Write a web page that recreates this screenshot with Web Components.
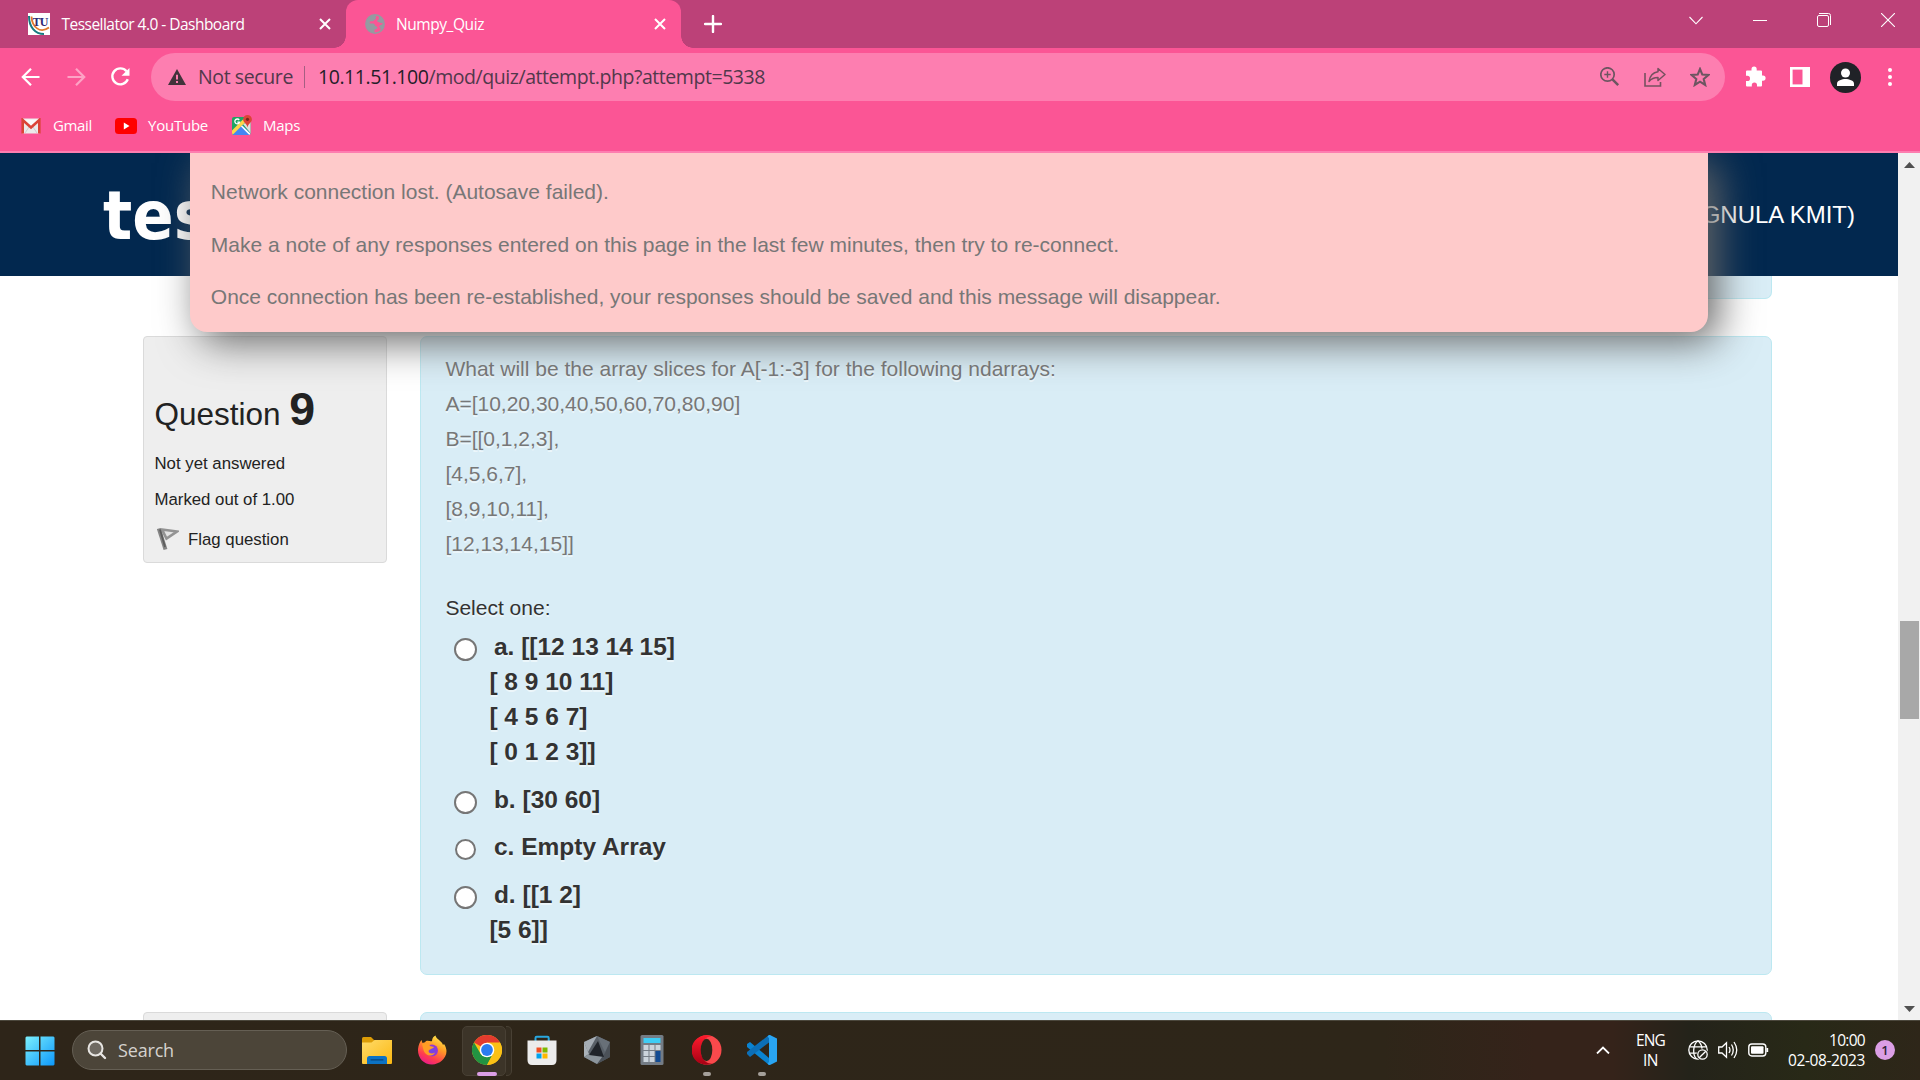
<!DOCTYPE html>
<html lang="en">
<head>
<meta charset="utf-8">
<title>Numpy_Quiz</title>
<style>
html,body{margin:0;height:100%;overflow:hidden}
body{font-family:"Liberation Sans",Arial,sans-serif;background:#fff}
</style>
</head>
<body>
<desktop-screen></desktop-screen>
<script>
const ICONS = {
  tu: [22,22,`<rect width="22" height="22" fill="#fff"/><path d="M1 3C1 14 7 21 16 21" fill="none" stroke="#177a80" stroke-width="2"/><path d="M3.500 3.500C4 14 12 21 21 14.500" fill="none" stroke="#e07a2b" stroke-width="1.800"/><text x="4.500" y="13" font-family="Liberation Serif" font-weight="bold" font-size="12" textLength="16" fill="#2d2a74">TU</text>`],
  globe: [20,20,`<circle cx="10" cy="10" r="9.200" fill="none" stroke="#949ba1" stroke-width="1.400"/><path d="M1 10C1 5 5 1 10 1L12 1.500C10.500 2.500 10.300 4.200 11.500 5 9 5 9.500 7.500 6.500 7.300 4.500 7.200 4 9 5.500 9.500H8C10 9.500 9.500 12 11.500 12.500 13.500 13 12 15.500 9.500 15.500V19C5 19 1 14.500 1 10zM13.500 1.800C17 3.500 19 6.500 19 10 19 13 17.500 15.500 15.500 17 16 14 15 13.500 14 12.500 15 11 17 11 18 9.500L14.500 8.500C13 8 11.500 7.500 12.500 6 14 5.500 14.500 4 13.500 1.800z" fill="#949ba1"/>`],
  x: [12,12,`<path d="M1 1L11 11M11 1L1 11" stroke="#fff" stroke-width="2"/>`],
  plus: [18,18,`<path d="M9 1V17M1 9H17" stroke="#fff" stroke-width="2.400" stroke-linecap="round"/>`],
  chev: [16,10,`<path d="M1.500 1L8 7.800 14.500 1" stroke="#fff" fill="none" stroke-width="1.100"/>`],
  min: [14,14,`<path d="M0 7.500H14" stroke="#fff"/>`],
  restore: [14,14,`<rect x=".5" y="2.500" width="11" height="11" rx="1.500" fill="none" stroke="#fff"/><path d="M2 .5H11.500Q13.500 .5 13.500 2.500V12" fill="none" stroke="#fff"/>`],
  close: [14,14,`<path d="M0 0L14 14M14 0L0 14" stroke="#fff" stroke-width="1.100"/>`],
  back: [20,20,`<path d="M18.500 10H2M10 1.800L1.800 10 10 18.200" stroke="#fff" fill="none" stroke-width="2.200"/>`],
  fwd: [20,20,`<path d="M1.500 10H18M10 1.800L18.200 10 10 18.200" stroke="#fda3c5" fill="none" stroke-width="2.200"/>`],
  reload: [20,20,`<path d="M16.500 4.200A8 8 0 1 0 17.800 12.300" stroke="#fff" fill="none" stroke-width="2.400"/><path d="M19.500 1V8.800H11.500z" fill="#fff"/>`],
  warn: [18,16,`<path d="M9 0L18 16H0z" fill="#42333b"/><path d="M9 5.700V10.500M9 12V14" stroke="#fd7eb0" stroke-width="2"/>`],
  zoomin: [20,20,`<circle cx="7.500" cy="7.500" r="6.700" fill="none" stroke="#6d5561" stroke-width="1.700"/><path d="M12.200 12.200L18.200 18.200" stroke="#6d5561" stroke-width="2.500"/><path d="M7.500 4.300V10.700M4.300 7.500H10.700" stroke="#6d5561" stroke-width="1.400"/>`],
  share: [22,20,`<path d="M1 6V19H16.500V15" fill="none" stroke="#75515f" stroke-width="1.600"/><path d="M14 1.500L21 7.500 14 13.500V10.500C9.500 10.500 7 12 5 14.500 5.800 9.500 8.500 5.500 14 4.800z" fill="none" stroke="#75515f" stroke-width="1.500" stroke-linejoin="round"/>`],
  star: [20,20,`<path d="M10 2L12.300 7.600 18.300 8 13.700 12 15.200 18 10 14.700 4.800 18 6.300 12 1.700 8 7.700 7.600z" fill="none" stroke="#6d5561" stroke-width="2.100"/>`],
  puzzle: [21,21,`<path d="M2 4.500H6.500V3.200a2.600 2.600 0 0 1 5.200 0V4.500H16Q17 4.500 17 5.500V9.500H18a2.600 2.600 0 0 1 0 5.200H17V19.500Q17 20.500 16 20.500H12V19a2.400 2.400 0 0 0-5.200 0V20.500H2Q1 20.500 1 19.500V15H2.400a2.400 2.400 0 0 0 0-5.200H1V5.500Q1 4.500 2 4.500z" fill="#fff"/>`],
  panel: [20,20,`<rect x="1.300" y="1.300" width="17.400" height="17.400" fill="none" stroke="#fff" stroke-width="2.600"/><rect x="12.500" y="1" width="7" height="18" fill="#fff"/>`],
  avatar: [31,31,`<circle cx="15.500" cy="15.500" r="15.500" fill="#202227"/><circle cx="15.500" cy="11" r="4.500" fill="#fff"/><path d="M7 24V21.500C7 18.500 12 17 15.500 17S24 18.500 24 21.500V24z" fill="#fff"/>`],
  dots: [4,18,`<circle cx="2" cy="2" r="2" fill="#fff"/><circle cx="2" cy="9" r="2" fill="#fff"/><circle cx="2" cy="16" r="2" fill="#fff"/>`],
  gmail: [20,16,`<rect x="1" y=".5" width="18" height="15" rx="1.500" fill="#eceaea"/><path d="M1 1.500H19L10 10z" fill="#f9f9f9"/><path d="M4 15L8 9M16 15L12 9" stroke="#d0cccc"/><path d="M1.700 15.500V2L10 9.500 18.300 2V15.500" fill="none" stroke="#db4437" stroke-width="2.600"/>`],
  youtube: [22,16,`<rect width="22" height="16" rx="3.500" fill="#f00"/><path d="M8.800 4.500L14.500 8 8.800 11.500z" fill="#fff"/>`],
  maps: [20,20,`<clipPath id="m"><rect y="2" width="18.500" height="18" rx="2"/></clipPath><g clip-path="url(#m)"><rect width="20" height="20" fill="#1fa463"/><path d="M0 20L10 10 20 20z" fill="#4486f4"/><path d="M11 9L20 20V5z" fill="#dfdfdf"/><path d="M-1 19L14 4" stroke="#ffd54b" stroke-width="3.500"/><path d="M9.500 11L19 20.500" stroke="#fff" stroke-width="1.600"/></g><path d="M7.200 5A2.400 2.400 0 1 0 7.500 7.200H5.300" fill="none" stroke="#fff" stroke-width="1.300"/><path d="M15.500 0a4.400 4.400 0 0 1 4.400 4.400C19.900 7.500 16 8.500 15.500 12.500 15 8.500 11.100 7.500 11.100 4.400A4.400 4.400 0 0 1 15.500 0z" fill="#db4437"/><circle cx="15.500" cy="4.300" r="1.600" fill="#7b231e"/>`],
  flag: [22,24,`<path d="M1.800 1.500L8.500 22.500" stroke="#858585" stroke-width="4"/><path d="M5 2.500L20 4.500 9.500 11.500z" fill="#e4e4e4" stroke="#939393" stroke-width="2.600"/><path d="M3 2.500L8 20" stroke="#5d5d5d" stroke-width="1.800"/>`],
  win: [30,30,`<defs><linearGradient id="w" x1="0" y1="0" x2="30" y2="30" gradientUnits="userSpaceOnUse"><stop offset="0" stop-color="#7df1fd"/><stop offset="1" stop-color="#0b96fb"/></linearGradient></defs><path d="M1.500 .5H14V14H.5V1.500zM15.500 .5H28.500L29.500 1.500V14H15.500zM.5 15.500H14V29.500H1.500L.5 28.500zM15.500 15.500H29.500V28.500L28.500 29.500H15.500z" fill="url(#w)"/>`],
  mag: [20,20,`<circle cx="8.500" cy="8.500" r="7" fill="#6f6a62" stroke="#e8e6e3" stroke-width="2"/><path d="M13.500 13.500L18 18" stroke="#e8e6e3" stroke-width="2.400" stroke-linecap="round"/>`],
  folder: [30,27,`<defs><linearGradient id="f" x1="0" y1="0" x2="1" y2="1"><stop offset="0" stop-color="#ffdb69"/><stop offset="1" stop-color="#fbb812"/></linearGradient></defs><path d="M0 1.500Q0 0 1.500 0H9L12.500 3.500V8H0z" fill="#dc9c06"/><path d="M0 5.500H9.500L12.500 3H30V26Q30 27 29 27H1Q0 27 0 26z" fill="url(#f)"/><path d="M5 27V21.500Q5 19 7.500 19H22.500Q25 19 25 21.500V27z" fill="#0c72c4"/><path d="M9 22.800H21" stroke="#07447c" stroke-width="1.200" stroke-linecap="round"/>`],
  firefox: [30,30,`<defs><linearGradient id="x" x1=".8" y1="0" x2=".3" y2="1"><stop offset="0" stop-color="#fff14f"/><stop offset=".4" stop-color="#ff9a25"/><stop offset=".75" stop-color="#ff3d4e"/><stop offset="1" stop-color="#e91a8c"/></linearGradient><radialGradient id="y"><stop offset="0" stop-color="#6a48ed"/><stop offset="1" stop-color="#9936cf"/></radialGradient></defs><path d="M1 14C1.500 10 3 6.500 4.500 5L5.500 8 8 7.300C10 4 13 7 15 6 15 3 17 1 18.500 .5 19 4 25 6 26 10L27 9C34 19 25 29.500 15 29.500 6.500 29.500 .5 23 1 14z" fill="url(#x)"/><circle cx="15" cy="15.500" r="6" fill="url(#y)"/><path d="M5 9C8 7 12 8 13 11L17 12C16 14 13 13.500 11.500 16 12 19 16 19 18 17.500 16 22.500 8 21 6.500 15z" fill="#ff9d24"/>`],
  chrome: [30,30,`<circle cx="15" cy="15" r="15" fill="#fbc116"/><path d="M15 15L2 7.500A15 15 0 0 1 28 7.500z" fill="#e33b2e"/><path d="M2 7.500L9 19.500 15 22 21.200 18.500 15 30A15 15 0 0 1 2 7.500z" fill="#229342"/><path d="M28 7.500H15L21.200 18.500 15 30A15 15 0 0 0 28 7.500z" fill="#fbc116"/><circle cx="15" cy="15" r="7.300" fill="#fff"/><circle cx="15" cy="15" r="5.900" fill="#2a7cf0"/>`],
  store: [30,30,`<path d="M8.500 7V3Q8.500 1.800 9.700 1.800H20.500Q21.700 1.800 21.700 3V7" fill="none" stroke="#29a8e0" stroke-width="2"/><path d="M.5 5.500H29.500V25Q29.500 30 25 30H5Q.5 30 .5 25z" fill="#ececec"/><path d="M9.500 12.500h5v5h-5z" fill="#f04f24"/><path d="M15.500 12.500h5v5h-5z" fill="#7eb900"/><path d="M9.500 18.500h5v5h-5z" fill="#00a3ee"/><path d="M15.500 18.500h5v5h-5z" fill="#feb800"/>`],
  hex: [28,30,`<path d="M14 1L27 7V22L14 29 1 22V7z" fill="#596068"/><path d="M14 1L1 7 5 17z" fill="#a5adb5"/><path d="M14 1L27 7 22 17z" fill="#687078"/><path d="M1 7V22L6 19z" fill="#aab2b9"/><path d="M1 22L14 29 22 21 6 19z" fill="#8b949b"/><path d="M27 7V22L14 29 22 18z" fill="#4b5158"/><path d="M15 6L6 20 21 22z" fill="#20242a"/>`],
  calc: [24,30,`<rect x=".5" width="23" height="30" rx="1.500" fill="#747c85"/><rect x="3.500" y="3" width="17" height="5" fill="#3ecdf5"/><g fill="#cbd4dc"><path d="M3.500 10h5v5h-5zM9.500 10h5v5h-5zM15.500 10h5v5h-5zM3.500 16h5v5h-5zM9.500 16h5v5h-5zM3.500 22h5v5h-5zM9.500 22h5v5h-5z"/></g><path d="M15.500 16h5v11h-5z" fill="#124b92"/>`],
  opera: [30,30,`<defs><linearGradient id="o" x2="0" y2="1"><stop stop-color="#ff1b2d"/><stop offset="1" stop-color="#a70014"/></linearGradient></defs><ellipse cx="15" cy="15" rx="14.500" ry="14.700" fill="#f9494c"/><path d="M15 .3A14.700 14.700 0 1 0 21 28C15 30 9 24 9 15S15 0 21 2A14 14 0 0 0 15 .3z" fill="url(#o)"/><ellipse cx="14.500" cy="15" rx="5.800" ry="11.300" fill="#2d2519"/>`],
  vscode: [30,30,`<path d="M0 9L3 7 22 23V30L0 12z" fill="#0a83d1"/><path d="M0 19L3 22 22 7.500V0L0 17z" fill="#0c6fb7"/><path d="M22 0H23L30 3.500V26.500L23 30H22L20.500 28.500 22 27V3L20.500 1.500z" fill="#29a5f3"/>`],
  up: [14,8,`<path d="M1 7.500L7 1.500 13 7.500" stroke="#fff" stroke-width="1.800" fill="none"/>`],
  net: [20,20,`<g fill="none" stroke="#fff" stroke-width="1.300"><circle cx="10" cy="10" r="9.200"/><path d="M10 .8C4.500 5 4.500 15 8.500 19M10 .8C13 3.500 14 6.500 14 9M1.500 6.800H18.500M1.500 13.200H9"/></g><circle cx="14.500" cy="14.500" r="6" fill="#24231a"/><circle cx="14.500" cy="14.500" r="4.700" fill="none" stroke="#fff" stroke-width="1.300"/><path d="M11.200 17.800L17.800 11.200" stroke="#fff" stroke-width="1.300"/>`],
  vol: [20,18,`<g fill="none" stroke="#fff" stroke-width="1.300"><path d="M.7 6V12H4L8.500 16.300V1.700L4 6z"/><path d="M11 6Q13 9 11 12M13.500 3.500Q17 9 13.500 14.500M16 1Q21.500 9 16 17"/></g>`],
  batt: [21,14,`<rect x=".8" y="1" width="17" height="12" rx="3" fill="none" stroke="#fff" stroke-width="1.400"/><rect x="3" y="3.200" width="12.500" height="7.600" rx="1" fill="#fff"/><path d="M19.300 5V9" stroke="#fff" stroke-width="1.800"/>`],
  tri: [11,6,`<path d="M5.500 0L11 6H0z" fill="#505050"/>`],
  trid: [11,6,`<path d="M0 0H11L5.500 6z" fill="#505050"/>`]
};

function define(name, html, after) {
  const t = document.createElement('template');
  t.innerHTML = html;
  customElements.define(name, class extends HTMLElement {
    connectedCallback() {
      if (this.shadowRoot) return;
      this.attachShadow({mode: 'open'}).append(t.content.cloneNode(true));
      if (after) after(this, this.shadowRoot);
    }
  });
}

define('ui-icon', `<style>:host{display:block;flex:none}svg{display:block}</style>`, (el, root) => {
  const [w, h, body] = ICONS[el.getAttribute('name')];
  root.innerHTML += `<svg width="${w}" height="${h}" viewBox="0 0 ${w} ${h}">${body}</svg>`;
});

/* A single-line label whose tracking is adjusted to fill the width in its "w" attribute. */
define('ui-label', `<style>:host{display:block;flex:none;white-space:nowrap;font-family:"Open Sans","Noto Sans",sans-serif}span{display:inline-block}</style><span><slot></slot></span>`, (el, root) => {
  const s = root.querySelector('span'), w = +el.getAttribute('w');
  const d = (w - s.getBoundingClientRect().width) / el.textContent.length;
  s.style.letterSpacing = d + 'px';
  el.style.width = w + 'px';
});

define('tab-strip', `<style>
:host{display:flex;height:48px;background:#bc4178;color:#fff;font-size:15.500px}
.tab{display:flex;align-items:center;box-sizing:border-box;height:48px}
.tab ui-label{margin-bottom:1px}
.one{width:346px;padding:0 15px 0 28px}
.two{width:335px;padding:0 15.500px 0 19px;background:#fb5595;border-radius:12px 12px 0 0;position:relative}
.two::before,.two::after{content:"";position:absolute;bottom:0;width:12px;height:12px}
.two::before{left:-12px;background:radial-gradient(circle at 0 0,transparent 11.500px,#fb5595 12px)}
.two::after{right:-12px;background:radial-gradient(circle at 100% 0,transparent 11.500px,#fb5595 12px)}
.x{margin-left:auto}
.plus{margin:15px 0 0 22.500px}
.win{display:flex;margin-left:auto;margin-right:25px;padding-top:13px}
.win ui-icon{margin-left:50px}.win .c{margin:3px -1px 0 0}
</style>
<div class="tab one"><ui-icon name="tu"></ui-icon><ui-label w="183" style="margin-left:11.500px">Tessellator 4.0 - Dashboard</ui-label><ui-icon class="x" name="x"></ui-icon></div>
<div class="tab two"><ui-icon name="globe"></ui-icon><ui-label w="88" style="margin-left:11px">Numpy_Quiz</ui-label><ui-icon class="x" name="x"></ui-icon></div>
<ui-icon class="plus" name="plus"></ui-icon>
<div class="win"><ui-icon class="c" name="chev"></ui-icon><ui-icon name="min"></ui-icon><ui-icon name="restore"></ui-icon><ui-icon name="close"></ui-icon></div>`);

define('tool-bar', `<style>
:host{display:flex;align-items:center;height:58px;background:#fb5595}
.omni{display:flex;align-items:center;box-sizing:border-box;width:1574px;height:48px;margin-left:21px;padding:0 15px 0 17px;border-radius:24px;background:#fd7eb0;font-size:19.500px;color:#51384b}
.omni ui-label{margin-bottom:1px}
.bar{width:1px;height:22px;background:#a55f82;margin:0 13px 0 11px}
b{font-weight:400;color:#251d29}
</style>
<ui-icon name="back" style="margin-left:21px"></ui-icon><ui-icon name="fwd" style="margin-left:25px"></ui-icon><ui-icon name="reload" style="margin-left:24px"></ui-icon>
<div class="omni"><ui-icon name="warn"></ui-icon><ui-label w="95" style="margin-left:12px">Not secure</ui-label><div class="bar"></div><ui-label w="447"><b>10.11.51.100</b>/mod/quiz/attempt.php?attempt=5338</ui-label>
<ui-icon name="zoomin" style="margin-left:auto"></ui-icon><ui-icon name="share" style="margin-left:24px"></ui-icon><ui-icon name="star" style="margin-left:24px"></ui-icon></div>
<ui-icon name="puzzle" style="margin:-2px 0 0 20px"></ui-icon><ui-icon name="panel" style="margin-left:24px"></ui-icon><ui-icon name="avatar" style="margin-left:20px"></ui-icon><ui-icon name="dots" style="margin-left:27px"></ui-icon>`);

define('bookmark-bar', `<style>
:host{display:flex;align-items:center;box-sizing:border-box;height:47px;padding:0 0 8px 21px;background:#fb5595;border-bottom:2px solid #fd7eb0;color:#fff;font-size:15px}
</style>
<ui-icon name="gmail" style="margin-top:2px"></ui-icon><ui-label w="39" style="margin-left:12px">Gmail</ui-label>
<ui-icon name="youtube" style="margin:2px 0 0 23px"></ui-icon><ui-label w="60" style="margin-left:11px">YouTube</ui-label>
<ui-icon name="maps" style="margin:0 0 0 24px"></ui-icon><ui-label w="37" style="margin-left:11px">Maps</ui-label>`);

define('site-header', `<style>
:host{display:flex;flex:none;justify-content:space-between;align-items:center;height:123px;box-sizing:border-box;padding:0 43px 0 103px;background:#02284f;color:#fff}
.logo{font:bold 68px/80px "DejaVu Sans Condensed","DejaVu Sans",sans-serif;font-stretch:condensed;padding-top:3px}
.user{font-size:24px;line-height:28px}
</style><div class="logo">tes</div><div class="user">GNULA KMIT)</div>`);

define('connection-notice', `<style>
:host{display:block;position:absolute;left:190px;top:0;width:1518px;height:179px;box-sizing:border-box;padding:20.800px 20px 0 20.800px;background:#fecaca;border-radius:0 0 17px 17px;box-shadow:10px 10px 40px #666;color:#777;font-size:21px;line-height:35px}
p{margin:0 0 18.200px}
p+p{margin-bottom:16.800px}
</style><p>Network connection lost. (Autosave failed).</p><p>Make a note of any responses entered on this page in the last few minutes, then try to re-connect.</p><p>Once connection has been re-established, your responses should be saved and this message will disappear.</p>`);

define('question-info', `<style>
:host{display:block;flex:none;box-sizing:border-box;width:244px;height:227px;padding:46.500px 0 0 10.500px;border:1px solid #dadada;border-radius:4px;background:#eee;color:#222;font-size:16.800px;line-height:28px}
h3{margin:0;font-size:31.500px;font-weight:400;line-height:60px}
h3 b{font-size:46.500px;line-height:0}
div{margin-top:6.500px}
.s{margin-top:8px}
.f{display:flex;align-items:center;margin-top:11.500px}
.f span{margin-left:9.500px}
</style><h3>Question <b>9</b></h3><div>Not yet answered</div><div class="s">Marked out of 1.00</div><div class="f"><ui-icon name="flag" style="margin:-2px 0 0 2px"></ui-icon><span>Flag question</span></div>`);

define('answer-option', `<style>
:host{display:flex;margin-bottom:12.600px;font-size:24.500px;line-height:35px;font-weight:bold}
input{appearance:none;flex:none;box-sizing:border-box;width:23px;height:23px;margin:8.900px 12px 0 9px;border:2px solid #767676;border-radius:50%;background:#fff}
:host([small]) input{width:21px;height:21px;margin:9.500px 13px 0 10px}
div{text-indent:4.500px}
::slotted(p){margin:0;text-indent:0}
</style><input type="radio" name="answer"><div><slot></slot></div>`);

define('question-body', `<style>
:host{display:block;box-sizing:border-box;width:1352px;height:639px;padding:14.200px 24px 0 24.400px;border:1px solid #bce8f1;border-radius:7px;background:#d9edf6;color:#333;font-size:21px;line-height:35px;text-shadow:0 2px 0 rgba(255,255,255,.5)}
.q{color:#777}
.s{margin:29px 0 4px}
</style><div class="q">What will be the array slices for A[-1:-3] for the following ndarrays:<br>A=[10,20,30,40,50,60,70,80,90]<br>B=[[0,1,2,3],<br>[4,5,6,7],<br>[8,9,10,11],<br>[12,13,14,15]]</div>
<div class="s">Select one:</div>
<answer-option>a. [[12 13 14 15]<p>[ 8 9 10 11]</p><p>[ 4 5 6 7]</p><p>[ 0 1 2 3]]</p></answer-option>
<answer-option>b. [30 60]</answer-option>
<answer-option small>c. Empty Array</answer-option>
<answer-option>d. [[1 2]<p>[5 6]]</p></answer-option>`);

define('scroll-bar', `<style>
:host{display:flex;flex-direction:column;align-items:center;flex:none;box-sizing:border-box;position:relative;width:22px;padding:9px 0 8px;background:#f1f1f1}
.thumb{width:19px;height:98px;margin:453px 0 auto 1px;background:#a8a8a8}
</style><ui-icon name="tri"></ui-icon><div class="thumb"></div><ui-icon name="trid"></ui-icon>`);

define('quiz-page', `<style>
:host{display:flex;position:relative;height:867px;overflow:hidden;background:#fff}
main{display:flex;flex-direction:column;width:1898px}
.prev{flex:none;box-sizing:border-box;width:1352px;height:23px;margin-left:420px;border:1px solid #bce8f1;border-top:0;border-radius:0 0 7px 7px;background:#d9edf6}
.row{display:flex;flex:none;gap:33px;padding-left:143px;margin-top:37px;align-items:flex-start}
.a{box-sizing:border-box;width:244px;height:20px;border:1px solid #dadada;border-radius:4px 4px 0 0;background:#eee}
.b{box-sizing:border-box;width:1352px;height:20px;border:1px solid #bce8f1;border-radius:7px 7px 0 0;background:#d9edf6}
</style><main><site-header></site-header><div class="prev"></div>
<div class="row"><question-info></question-info><question-body></question-body></div>
<div class="row"><div class="a"></div><div class="b"></div></div></main>
<connection-notice></connection-notice><scroll-bar></scroll-bar>`);

define('task-bar', `<style>
:host{display:flex;align-items:center;box-sizing:border-box;height:60px;border-top:1px solid #4b473c;background:linear-gradient(90deg,#2e2519 0,#2e2619 72%,#35231a 80%,#35231a 84%,#24231a 88%,#282917 94%,#2e2619 100%);color:#fff;font-size:15.500px}
.search{display:flex;align-items:center;box-sizing:border-box;width:275px;height:40px;margin:0 2.500px 1px 17px;padding-left:13.500px;border:1px solid #655f54;border-radius:20px;background:#4c4539;color:#d5d2ce;font-size:18px}
.app{position:relative;display:flex;align-items:center;justify-content:center;width:55px;height:58px;flex:none}
.app ui-icon{margin:0 1px 1px 0}
.app>i{position:absolute;left:23.500px;bottom:4px;width:8px;height:4px;border-radius:2px;background:#a5a09a}
.app.on::before{content:"";position:absolute;left:2px;top:4px;width:44px;height:50px;box-sizing:border-box;border:1px solid #484034;border-radius:5px;background:#3c3428}
.app.on::after{content:"";position:absolute;left:46px;top:4px;width:6px;height:50px;box-sizing:border-box;border:1px solid #484034;border-left:0;border-radius:0 5px 5px 0;background:#352d21}
.app.on ui-icon{position:relative;z-index:1}
.app.on>i{z-index:1;left:17.500px;width:20px;background:#db9ee5}
.col{display:flex;flex-direction:column;line-height:20px;margin-bottom:2px}
.n{width:20px;height:20px;border-radius:50%;background:#db9ee5;color:#302336;font:600 13px/20px "Open Sans",sans-serif;text-align:center;margin:0 25px 1px 10px}
</style>
<ui-icon name="win" style="margin-left:25px"></ui-icon>
<div class="search"><ui-icon name="mag"></ui-icon><ui-label w="56" style="margin-left:11.500px">Search</ui-label></div>
<div class="app"><ui-icon name="folder"></ui-icon></div>
<div class="app"><ui-icon name="firefox"></ui-icon></div>
<div class="app on"><ui-icon name="chrome"></ui-icon><i></i></div>
<div class="app"><ui-icon name="store"></ui-icon></div>
<div class="app"><ui-icon name="hex"></ui-icon></div>
<div class="app"><ui-icon name="calc"></ui-icon></div>
<div class="app"><ui-icon name="opera"></ui-icon><i></i></div>
<div class="app"><ui-icon name="vscode"></ui-icon><i></i></div>
<ui-icon name="up" style="margin:0 0 2px auto"></ui-icon>
<div class="col" style="align-items:center;margin-left:26px"><ui-label w="29">ENG</ui-label><ui-label w="15">IN</ui-label></div>
<ui-icon name="net" style="margin:0 0 1px 23px"></ui-icon><ui-icon name="vol" style="margin:0 0 1px 10px"></ui-icon><ui-icon name="batt" style="margin:0 0 1px 10px"></ui-icon>
<div class="col" style="align-items:flex-end;margin-left:19px"><ui-label w="36">10:00</ui-label><ui-label w="77">02-08-2023</ui-label></div>
<div class="n">1</div>`);

define('desktop-screen', `<style>:host{display:flex;flex-direction:column;width:1920px;height:1080px;overflow:hidden}</style>
<tab-strip></tab-strip><tool-bar></tool-bar><bookmark-bar></bookmark-bar><quiz-page></quiz-page><task-bar></task-bar>`);
</script>
</body>
</html>
